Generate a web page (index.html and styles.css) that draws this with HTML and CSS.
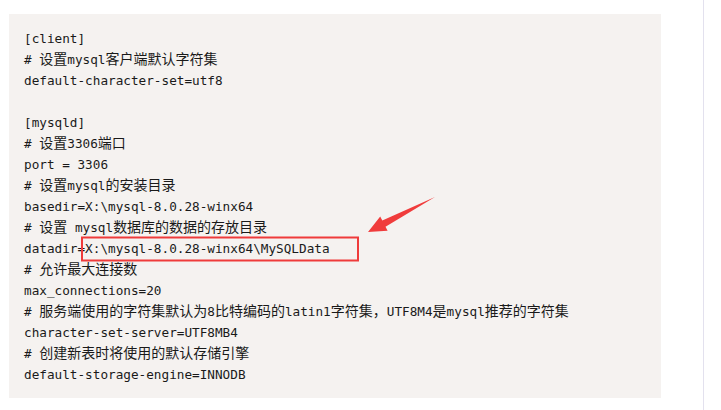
FILE: index.html
```html
<!DOCTYPE html>
<html lang="zh-CN">
<head>
    <meta charset="UTF-8">
    <meta name="viewport" content="width=device-width, initial-scale=1.0">
    <title>my.ini</title>
    <link rel="stylesheet" href="styles.css">
</head>
<body>
    <div class="page">
        <pre class="code">[client]
# <span class="zh">设置</span>mysql<span class="zh">客户端默认字符集</span>
default-character-set=utf8

[mysqld]
# <span class="zh">设置</span>3306<span class="zh">端口</span>
port = 3306
# <span class="zh">设置</span>mysql<span class="zh">的安装目录</span>
basedir=X:\mysql-8.0.28-winx64
# <span class="zh">设置</span> mysql<span class="zh">数据库的数据的存放目录</span>
datadir=X:\mysql-8.0.28-winx64\MySQLData
# <span class="zh">允许最大连接数</span>
max_connections=20
# <span class="zh">服务端使用的字符集默认为</span>8<span class="zh">比特编码的</span>latin1<span class="zh">字符集，</span>UTF8M4<span class="zh">是</span>mysql<span class="zh">推荐的字符集</span>
character-set-server=UTF8MB4
# <span class="zh">创建新表时将使用的默认存储引擎</span>
default-storage-engine=INNODB</pre>

        <!-- annotation drawn over the screenshot -->
        <svg class="mark" width="704" height="410" viewBox="0 0 704 410">
            <rect x="82" y="237.5" width="276" height="23" fill="none" stroke="#ef3b3b" stroke-width="2"/>
            <polygon fill="#f03c3c" points="435,197 385.5,226.8 387.6,230.8 368,232 380.2,216.6 382.3,220.6"/>
        </svg>
    </div>
</body>
</html>
```

FILE: styles.css
```css
body {
    margin: 0;
    padding: 0;
    background: #fff;
}
.page {
    position: relative;
    width: 704px;
    height: 410px;
    box-sizing: border-box;
    padding: 14px 0 0 9px;
    border-right: 1px solid #e3e1ee;
}
.code {
    margin: 0;
    width: 652px;
    height: 384px;
    box-sizing: border-box;
    padding: 14px 15px 13px;
    background: #f5f2f0;
    color: #1a1a1a;
    font-family: "DejaVu Sans Mono", "Liberation Mono", monospace;
    font-size: 12.7px;
    line-height: 21px;
    white-space: pre;
    overflow: hidden;
}
.zh {
    font-family: "Noto Sans CJK SC", sans-serif;
    font-size: 14px;
    line-height: 1;
}
.mark {
    position: absolute;
    left: 0;
    top: 0;
    pointer-events: none;
}
```
